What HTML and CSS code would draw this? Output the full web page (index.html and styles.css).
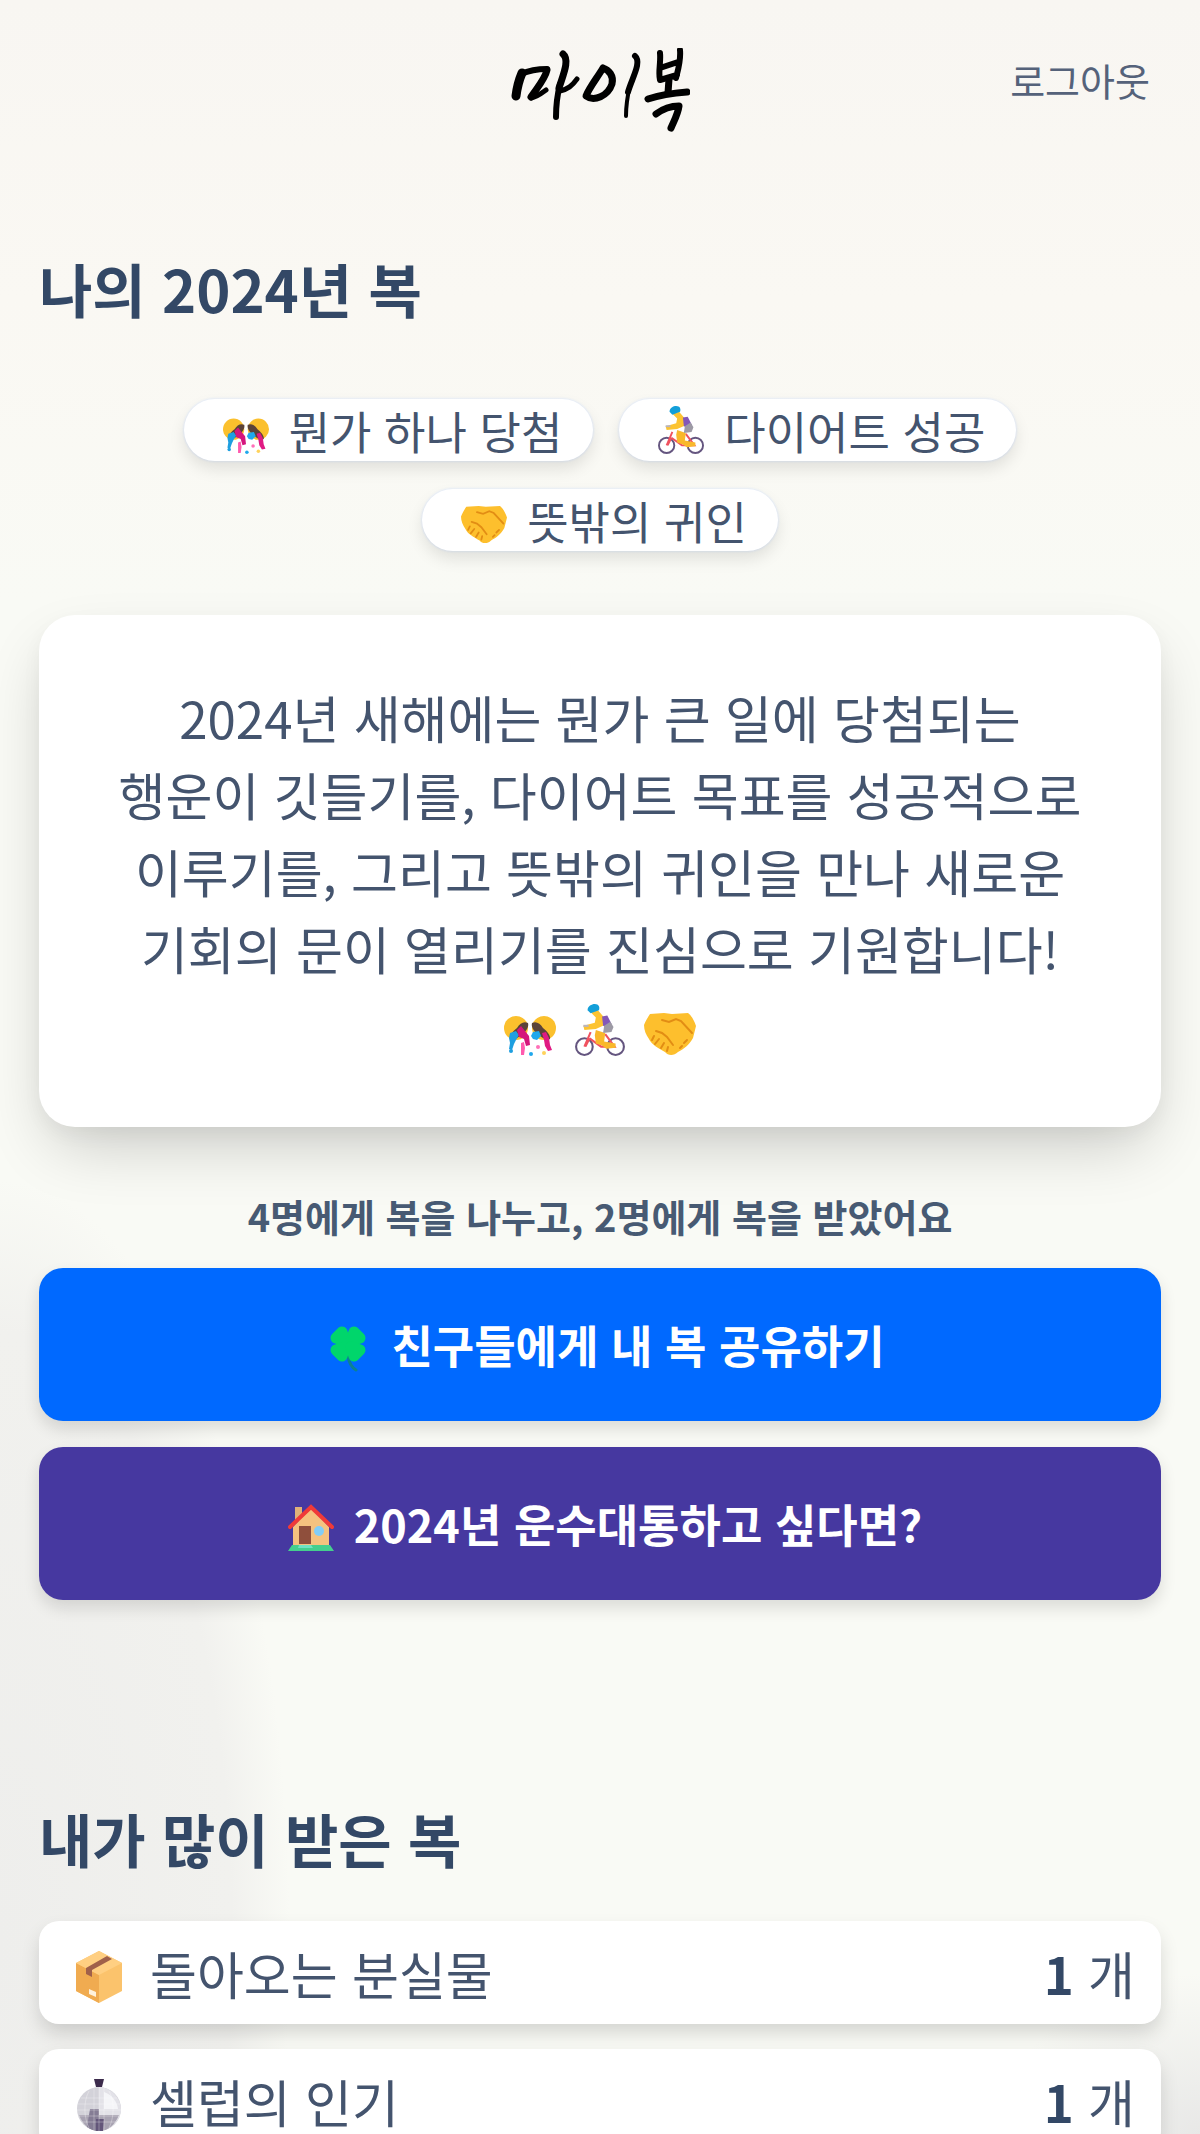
FILE: index.html
```html
<!DOCTYPE html>
<html lang="ko">
<head>
  <meta charset="UTF-8">
  <meta name="viewport" content="width=device-width, initial-scale=1.0">
  <title>마이복</title>
  <link rel="stylesheet" href="styles.css">
</head>
<body>
  <!-- 아이콘 모음 -->
  <svg class="sprite" aria-hidden="true">
    <symbol id="party" viewBox="0 0 52 40" preserveAspectRatio="xMidYMax">
      <circle cx="12" cy="12" r="12" fill="#fbc02d"/>
      <circle cx="40" cy="12" r="12" fill="#fbc02d"/>
      <path d="M13 12c3-5 7-7 11-5 1 3-1 8-6 11-4 4-9 7-12 5-1-3 3-8 7-11z" fill="#5b4339"/>
      <path d="M39 12c-3-5-7-7-11-5-1 3 1 8 6 11 4 4 9 7 12 5 1-3-3-8-7-11z" fill="#5b4339"/>
      <path d="M6 17l6-2 3 4-3 5-2 4-2 6-3-1 1-6-1-5z" fill="#1e9fe0"/>
      <path d="M13 14l4-4 4 5 4 5 1 9-4 1-2-7-5-2z" fill="#d4157c"/>
      <path d="M29 16l6-1 2 5-4 4-4-1-2-3z" fill="#1fa8ec"/>
      <path d="M38 17l4-1 3 6 1 7 2 5-4 1-3-5-1-6z" fill="#e01a83"/>
      <path d="M17 27l3-1 1 6-1 7h-3z" fill="#ff5aae"/>
      <circle cx="7" cy="35" r="2" fill="#1e9fe0"/>
      <circle cx="27" cy="38" r="2" fill="#1fa8ec"/>
      <circle cx="34" cy="31" r="2" fill="#ff70b8"/>
      <circle cx="40" cy="37" r="2" fill="#ffd35c"/>
    </symbol>
    <symbol id="bike" viewBox="0 0 48 50" preserveAspectRatio="xMidYMax">
      <g fill="none" stroke="#64557f" stroke-width="2">
        <circle cx="9" cy="41" r="8"/>
        <circle cx="39" cy="41" r="8"/>
      </g>
      <path d="M9 41l6-14M14 33l11 8h13L29 29M14 33l-4 8" fill="none" stroke="#f0525f" stroke-width="2"/>
      <path d="M15 8l7-2 6 7 1 7-9 4-11 1-1-4 11-3 1-5z" fill="#fcc331"/>
      <path d="M20 25l9 3-1 8 11 2v4l-9 1-4-3-6-2-1-8z" fill="#f9b82b"/>
      <path d="M26 12l5-1 4 8-1 5-7-3z" fill="#8357b8"/>
      <path d="M28 21l6-4 3 5-2 5-8 1z" fill="#9d9aa5"/>
      <path d="M12 6c0-4 4-6 7-6 4 0 5 3 4 6l-8 3z" fill="#139fd9"/>
      <path d="M8 21h5" stroke="#b9b4be" stroke-width="2"/>
    </symbol>
    <symbol id="hands" viewBox="0 0 52 44" preserveAspectRatio="xMidYMax">
      <path d="M6 2l14-1 8 1 16-1c3 2 6 7 8 13l-3 12c-4 7-9 11-15 14-4 4-10 4-13 0C14 36 7 32 5 27c-3-4-5-9-5-14C2 8 4 5 6 2z" fill="#fdbf2d"/>
      <path d="M18 8l7 2 7-3 5 2 11 12M12 19l6 2 5 4 6 8M10 24l-2 4M15 27l-4 5M20 31l-3 5M24 35l-1 4M43 28l-3 3M38 34l-2 2" fill="none" stroke="#e28d14" stroke-width="2" stroke-linecap="round"/>
    </symbol>
    <symbol id="clover" viewBox="-5 -8 46 54" preserveAspectRatio="xMidYMax">
      <path d="M18 30c1 7 3 11 8 14" fill="none" stroke="#0c8291" stroke-width="3" stroke-linecap="round"/>
      <g fill="none" stroke="#00d66b" stroke-width="11" stroke-linejoin="round">
        <path d="M12 6l-6 6 9 3z"/>
        <path d="M24 6l6 6-9 3z"/>
        <path d="M12 30l-6-6 9-3z"/>
        <path d="M24 30l6-6-9-3z"/>
      </g>
    </symbol>
    <symbol id="house" viewBox="0 0 46 46" preserveAspectRatio="xMidYMax">
      <path d="M7 2h7v14H7z" fill="#e0b179"/>
      <path d="M5 22L23 3l18 19v20H5z" fill="#f5c27f"/>
      <path d="M2 22L23 2l21 20" fill="none" stroke="#f03a38" stroke-width="4" stroke-linecap="round"/>
      <path d="M11 21h12v18H11z" fill="#8f4f3c"/>
      <circle cx="31" cy="26" r="5" fill="#82cdf7"/>
      <path d="M4 40h38l4 6H0z" fill="#45cf8e"/>
      <path d="M11 40h12l2 3H10z" fill="#6fe3c3"/>
    </symbol>
    <symbol id="box" viewBox="0 0 46 52" preserveAspectRatio="xMidYMax">
      <path d="M23 0l23 12v28L23 52 0 40V12z" fill="#fbc36c"/>
      <path d="M0 12l23 12v28L0 40z" fill="#f0ab50"/>
      <path d="M23 0l23 12-23 12L0 12z" fill="#ffcf82"/>
      <path d="M31 5l5 3-20 11v7l-6-3v-6z" fill="#a0604a"/>
      <path d="M13 38l7 3v5l-7-3z" fill="#fff2dd"/>
    </symbol>
    <symbol id="disco" viewBox="0 0 46 52" preserveAspectRatio="xMidYMax">
      <path d="M18 0h10l-2 8h-6z" fill="#3c2b4c"/>
      <circle cx="23" cy="30" r="22" fill="#d3d2d9"/>
      <path d="M23 8v44c10-1 20-8 22-20C45 19 36 9 23 8z" fill="#e3e2e8"/>
      <path d="M28 13c8 3 13 9 14 17H28z" fill="#f5f5f8"/>
      <path d="M3 36h40c-4 10-11 16-20 16S7 46 3 36z" fill="#a8a3b2"/>
      <path d="M14 30h9v22c-5 0-9-2-12-4z" fill="#857d95"/>
      <path d="M20 40h8l-1 12h-7z" fill="#63567a"/>
      <path d="M5 19h36M2 25h42M1 31h44M3 37h40M6 43h34M13 12c-6 11-5 27 0 37M18 9v43M23 8v44M28 9v43M33 12c6 11 5 27 0 37" fill="none" stroke="#fff" stroke-opacity=".3"/>
    </symbol>
  </svg>

  <header class="header">
    <a class="logo" href="#" aria-label="마이복">
      <svg viewBox="0 0 180 84" fill="none" stroke="#000" stroke-linecap="round" stroke-linejoin="round">
        <path d="M12 25C9 32 7 40 6 48" stroke-width="9"/>
        <path d="M11 26C20 22 29 21 37 21" stroke-width="6"/>
        <path d="M37 22C35 31 27 40 21 49" stroke-width="7"/>
        <path d="M21 50C27 49 32 45 36 42" stroke-width="5"/>
        <path d="M53 6C60 12 53 27 49 40" stroke-width="7"/>
        <path d="M50 36C47 48 46 58 46 69" stroke-width="6"/>
        <path d="M50 43C58 41 62 38 67 31" stroke-width="5"/>
        <path d="M93 20C87 30 79 40 76 48C84 54 98 48 102 36C104 28 99 22 93 20" stroke-width="7"/>
        <path d="M125 8C132 14 122 30 118 44" stroke-width="6"/>
        <path d="M120 37C117 50 116 59 116 68" stroke-width="4"/>
        <path d="M150 5C151 15 148 24 150 32M170 2C171 13 168 22 166 30M150 20L168 14M150 32L167 27" stroke-width="6"/>
        <path d="M159 31L158 45" stroke-width="7"/>
        <path d="M138 51C150 47 164 45 177 44" stroke-width="7"/>
        <path d="M146 66C154 60 162 58 169 58C168 66 164 73 161 80" stroke-width="7"/>
      </svg>
    </a>
    <button class="logout" type="button">로그아웃</button>
  </header>

  <main class="content">
    <section>
      <h1 class="title">나의 2024년 복</h1>
      <ul class="chips">
        <li class="chip"><svg class="icon"><use href="#party"/></svg>뭔가 하나 당첨</li>
        <li class="chip"><svg class="icon"><use href="#bike"/></svg>다이어트 성공</li>
        <li class="chip"><svg class="icon"><use href="#hands"/></svg>뜻밖의 귀인</li>
      </ul>
      <div class="card">
        <p>2024년 새해에는 뭔가 큰 일에 당첨되는 행운이 깃들기를, 다이어트 목표를 성공적으로 이루기를, 그리고 뜻밖의 귀인을 만나 새로운 기회의 문이 열리기를 진심으로 기원합니다!</p>
        <div class="card-icons">
          <svg class="icon"><use href="#party"/></svg>
          <svg class="icon"><use href="#bike"/></svg>
          <svg class="icon"><use href="#hands"/></svg>
        </div>
      </div>
      <p class="summary">4명에게 복을 나누고, 2명에게 복을 받았어요</p>
      <div class="actions">
        <button class="btn btn-share" type="button"><svg class="icon"><use href="#clover"/></svg>친구들에게 내 복 공유하기</button>
        <button class="btn btn-luck" type="button"><svg class="icon"><use href="#house"/></svg>2024년 운수대통하고 싶다면?</button>
      </div>
    </section>

    <section class="received">
      <h2 class="title">내가 많이 받은 복</h2>
      <ul class="list">
        <li class="item"><svg class="icon"><use href="#box"/></svg><span class="name">돌아오는 분실물</span><span><b>1</b> 개</span></li>
        <li class="item"><svg class="icon"><use href="#disco"/></svg><span class="name">셀럽의 인기</span><span><b>1</b> 개</span></li>
      </ul>
    </section>
  </main>
</body>
</html>
```
FILE: styles.css
```css
* {
  box-sizing: border-box;
  margin: 0;
  padding: 0;
}
body {
  font-family: "Noto Sans CJK KR", sans-serif;
  color: #44546e;
  word-break: keep-all;
  /* 은은한 배경 얼룩 */
  background:
    radial-gradient(ellipse 290px 760px at 0 1940px, #eeeeec 0%, #f1f1ee 80%, transparent 100%),
    radial-gradient(ellipse 200px 160px at 100% 2134px, #e8e8e7, transparent),
    linear-gradient(#f8f6f2, #faf8f3 300px, #f9faf5 600px, #f9faf5);
}
ul {
  list-style: none;
}
button {
  border: none;
  font-family: inherit;
  cursor: pointer;
}
.sprite {
  display: none;
}
.icon {
  flex: none;
  width: 46px;
  height: 48px;
}

.header {
  display: grid;
  grid-template-columns: 1fr auto 1fr;
  align-items: center;
  height: 158px;
  padding: 0 50px;
}
.logo {
  grid-column: 2;
  padding-top: 22px;
}
.logo svg {
  display: block;
  width: 180px;
  height: 84px;
}
.logout {
  justify-self: end;
  background: none;
  color: #55627a;
  font-size: 38px;
}

.content {
  padding: 86px 39px 0;
}
.title {
  color: #334866;
  font-size: 58px;
  line-height: 88px;
  font-weight: 600;
}

.chips {
  display: flex;
  flex-wrap: wrap;
  justify-content: center;
  gap: 28px 26px;
  padding: 67px 100px 64px;
}
.chip {
  display: flex;
  align-items: center;
  gap: 20px;
  height: 62px;
  padding: 0 31px 0 39px;
  border-radius: 31px;
  background: #fff;
  box-shadow: 0 8px 16px rgba(0, 0, 0, 0.1), 0 0 3px #d6e4ff;
  font-size: 45px;
}

.card {
  padding: 64px 68px 54px;
  border-radius: 36px;
  background: #fff;
  box-shadow: 0 28px 64px -12px rgba(0, 0, 0, 0.2), 0 8px 20px rgba(0, 0, 0, 0.04);
  font-size: 51px;
  line-height: 77px;
  text-align: center;
}
.card-icons {
  display: flex;
  justify-content: center;
  align-items: center;
  gap: 18px;
  height: 86px;
}
.card-icons .icon {
  width: 52px;
  height: 52px;
}

.summary {
  padding: 61px 0 24px;
  color: #475a73;
  font-size: 38px;
  line-height: 56px;
  font-weight: 600;
  text-align: center;
}
.actions {
  display: grid;
  gap: 26px;
}
.btn {
  display: flex;
  justify-content: center;
  align-items: center;
  gap: 20px;
  height: 153px;
  padding-left: 10px;
  border-radius: 24px;
  box-shadow: 0 8px 16px rgba(0, 0, 0, 0.12);
  color: #fff;
  font-size: 45px;
  font-weight: 600;
}
.btn .icon {
  height: 54px;
}
.btn-share {
  background: #0069ff;
}
.btn-luck {
  background: #4638a0;
}

.received {
  padding-top: 194px;
}
.list {
  display: grid;
  gap: 25px;
  padding-top: 39px;
}
.item {
  display: flex;
  align-items: center;
  gap: 28px;
  height: 103px;
  padding: 0 26px 0 37px;
  border-radius: 20px;
  background: #fff;
  box-shadow: 0 10px 20px -2px rgba(0, 0, 0, 0.16);
  font-size: 51px;
}
.item .icon {
  height: 60px;
}
.item .name {
  flex: 1;
}
.item b {
  color: #334866;
}
```
